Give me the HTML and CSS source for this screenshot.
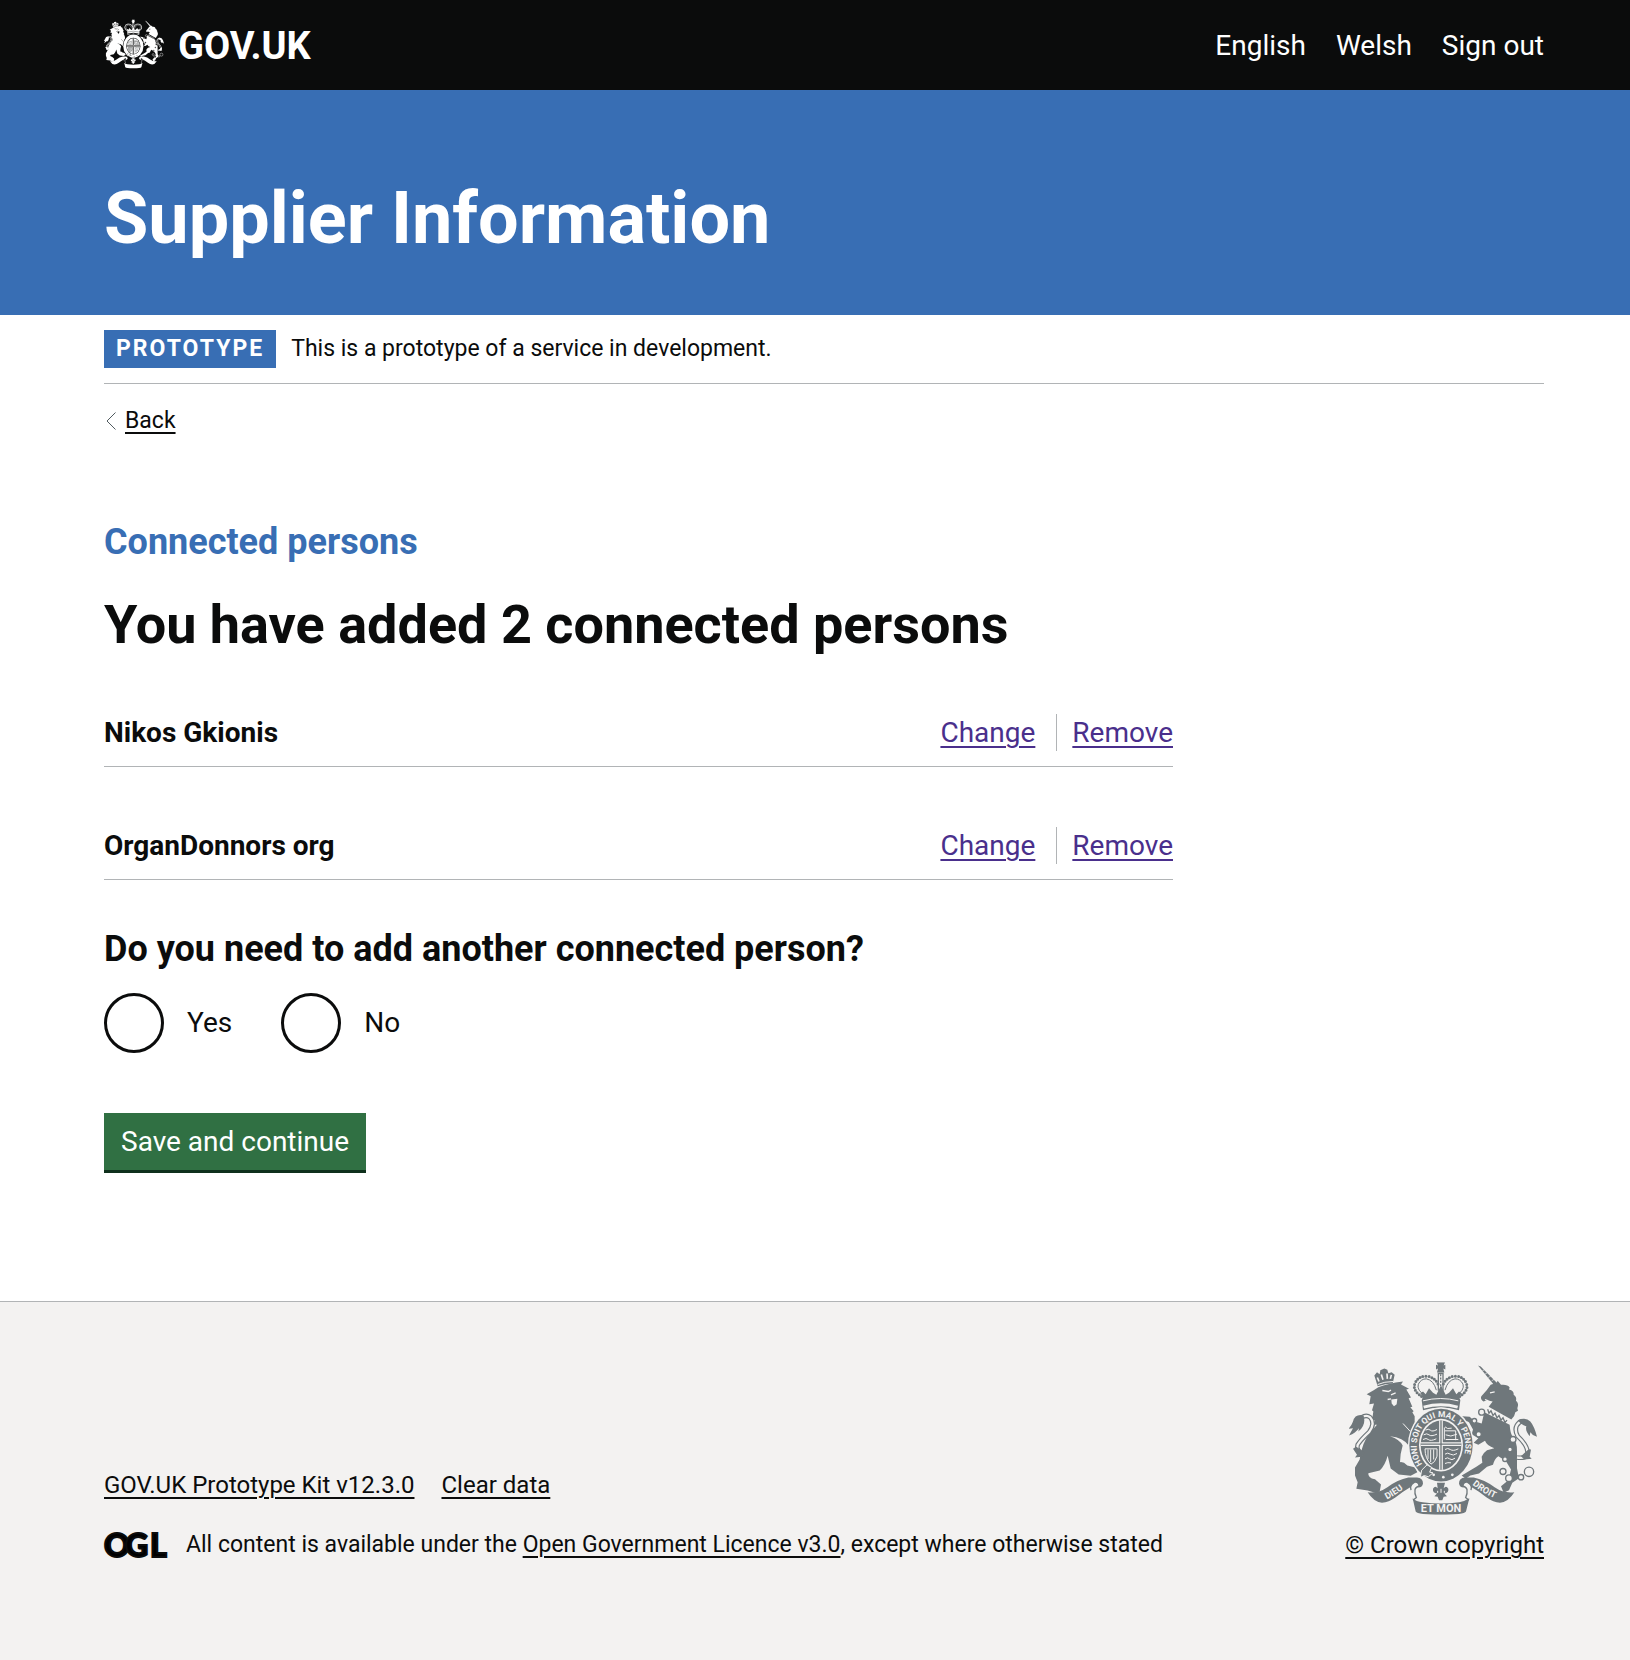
FILE: index.html
```html
<!DOCTYPE html>
<html lang="en">
<head>
  <meta charset="utf-8">
  <meta name="viewport" content="width=device-width, initial-scale=1">
  <title>You have added 2 connected persons - Supplier Information - GOV.UK</title>
  <link rel="stylesheet" href="styles.css">
</head>
<body>

<svg class="sprite" aria-hidden="true">
  <symbol id="arms" viewBox="66 66 564 458">
    <!-- lion: crown, head and body -->
    <path fill="currentColor" d="M152 138l-10-32 8-10 8 6 2-12 12-5 9 4 3 10 10-3 9 8-6 26q-22 0-45 8z"/>
    <path class="cut" d="M151 112l5 12M163 103l5 16M180 100l1 16M193 104l-3 12" stroke-width="5"/>
    <path class="cut" d="M152 133q20-9 46-9" stroke-width="3"/>
    <path fill="currentColor" d="M140 150l14-9q28-11 74-17l-6 9 24 13-8 2 14 24-7 2 11 26-6 1 10 12-4 3 7 12 0 30-8 50-10 8q-16-24-56-28 30 10 38 28-8 26-8 50 10-2 22 10l24 6 6 14-20 11-36-4-24-18-9-38q-8 30-24 44l-34 8q-2 14 20 18l18 16-4 22-16 2-20-6-34-5 4-20-8-20 0-24 14-24q6-50 32-82l20-22-6 0 0-14-9 2 4-28-4-4 6-20-14 2 4-24-12-6z"/>
    <path class="cut" d="M166 151l18 3 8-4M192 164l14-6M182 178l10-2" stroke-width="4"/>
    <path fill="var(--field)" d="M193 178l18-2-2 16-8 6-7-8z"/>
    <path class="cut" d="M228 250l22 24" stroke-width="3"/>
    <!-- lion's tail -->
    <path d="M108 342q-22-10-16-28 10-16 34-38 20-26 4-44-12-10-26 0" fill="none" stroke="currentColor" stroke-width="14"/>
    <path class="cut" d="M108 342q-22-10-16-28 10-16 34-38 20-26 4-44-12-10-26 0" stroke-width="7"/>
    <path fill="currentColor" d="M110 226q-26-6-32 18-4 12-14 22l14-2-12 22q20-8 30-22l-2 10q18-14 18-34z"/>
    <path fill="currentColor" d="M78 326l12 18-6 8 20-2 10-12-26-18z"/>

    <!-- unicorn: horn, head and body -->
    <path fill="currentColor" d="M453 76l8 3 50 50-8 8z"/>
    <path class="cut" d="M466 92l6-3M474 102l8-5M484 112l8-5M494 122l8-5" stroke-width="2"/>
    <path fill="currentColor" d="M512 122l10 12q20-2 26 8l-2 6q16 4 14 16 10 6 7 18 10 8 4 22l2 8-8 4q-2 14-12 22l-68-38 12-16-16-4-12 4q-10-8-6-16l16-18 12-16 18-6z"/>
    <path class="cut" d="M489 158l14-3M474 178l10 4" stroke-width="4"/>
    <path d="M482 207l4 12 6-7 6 14 6-7 6 14 6-7 6 14 6-7 6 14 6-7" fill="none" stroke="currentColor" stroke-width="4"/>
    <path fill="currentColor" d="M472 216l76 38q2 26 8 34 16 20 14 46l0 50 6 30-20 14-10 22-16 8-8-20 22-18 8-32-16-26-22-14q-12 8-16 26l-18 6-24 20-26 6-14 10-12-10 44-26 18-12-2-18q4-12 16-20l22-6q-22-6-28-22l-20 12-14-6 14-14-20-12 4-14-12-22q-10-6-12 2l-18-6 10-14 22 2 16 14 20 6z"/>
    <g fill="var(--field)" stroke="currentColor" stroke-width="4">
      <circle cx="464" cy="216" r="9"/><circle cx="442" cy="242" r="7"/><circle cx="455" cy="282" r="8"/>
      <circle cx="558" cy="298" r="9"/><circle cx="549" cy="328" r="7"/><circle cx="534" cy="357" r="7"/>
      <circle cx="528" cy="394" r="9"/><circle cx="546" cy="414" r="10"/><circle cx="606" cy="395" r="14"/>
      <circle cx="582" cy="411" r="8"/>
    </g>
    <!-- unicorn's tail -->
    <path d="M570 352q30 4 32-14 0-22-30-50-14-26 6-42 12-6 20 4" fill="none" stroke="currentColor" stroke-width="14"/>
    <path class="cut" d="M570 352q30 4 32-14 0-22-30-50-14-26 6-42 12-6 20 4" stroke-width="7"/>
    <path fill="currentColor" d="M572 240q24-10 38 4 12 14 20 46-14-4-20-14l-2 12q-14-16-10-30-12-2-26-18z"/>
    <path fill="currentColor" d="M612 328l-4 22 6 6-22 2-10-10 22-20z"/>

    <!-- royal crown -->
    <path fill="currentColor" d="M329 66h25l-4 10 5-2v14l-6-3 3 12h-22l3-12-6 3V74l6 2z"/>
    <path d="M334 100h14v50h-14z" fill="none" stroke="currentColor" stroke-width="4"/>
    <path d="M341 102v46" stroke="currentColor" stroke-width="4" stroke-dasharray="6 4"/>
    <path d="M292 174q-38-22-28-44 8-22 34-22 26 2 36 26M390 174q38-22 28-44-8-22-34-22-26 2-36 26" fill="none" stroke="currentColor" stroke-width="9" stroke-linecap="round" stroke-dasharray="0 9"/>
    <path d="M296 168q-28-18-22-36 8-16 24-16 22 4 30 34M386 168q28-18 22-36-8-16-24-16-22 4-30 34" fill="none" stroke="currentColor" stroke-width="3"/>
    <path fill="currentColor" d="M284 180l4-10-8-10 8-6 8 8 10-18 12 14 10 6 14-28 14 28 10-6 12-14 10 18 8-8 8 6-8 10 4 10-4 30q-54-16-108 0z"/>
    <path class="cut" d="M288 182q53-14 106 0" stroke-width="3"/>
    <path class="cut" d="M290 201q52-14 102 0" stroke-width="9"/>

    <!-- garter and shield -->
    <ellipse cx="342" cy="315" rx="99" ry="114" fill="var(--field)"/>
    <ellipse cx="342" cy="315" rx="95" ry="109" fill="currentColor"/>
    <ellipse cx="342" cy="315" rx="66" ry="79" fill="var(--field)"/>
    <ellipse cx="342" cy="315" rx="61" ry="74" fill="currentColor"/>
    <path class="cut" d="M342 241v148M281 312h122" stroke-width="11"/>
    <path d="M342 241v148M281 312h122" stroke="currentColor" stroke-width="4"/>
    <g class="cut" stroke-width="3">
      <path d="M296 270q8-6 14 0t20-2M290 284q10-6 16 0t24-2M288 298q10-6 16 0t24-2M354 260q6 8 20 4M354 272h32M356 284q14 8 34-2M356 298h38M352 262v36M386 272v28M354 328q8-6 16 0t24-2M354 342q8-6 16 0t20-2M354 356q8-6 14 0t16-2M354 370q8-4 18-2"/>
      <path d="M294 326h36v22q-6 20-18 24-18-16-18-46zM303 328v28M311 328v38M320 328v30"/>
    </g>
    <circle cx="320" cy="404" r="4" fill="var(--field)"/><circle cx="349" cy="411" r="4" fill="var(--field)"/><circle cx="376" cy="404" r="4" fill="var(--field)"/>
    <path fill="currentColor" stroke="var(--field)" stroke-width="3" d="M284 390l16-16 14 8-6 14 10 2-14 12-12-4-12 6z"/>

    <!-- ribbons -->
    <path d="M252 450q-6-22 16-28 18 2 14 14-16 4-18 12-2 12 4 24l-10 8M432 450q6-22-16-28-18 2-14 14 16 4 18 12 2 12-4 24l10 8" fill="var(--field)" stroke="currentColor" stroke-width="4"/>
    <path fill="currentColor" d="M122 456q32 4 58-14 32-24 64-30l26 0q18 2 18 18-2 12-14 12 2-14-10-14-8 4-12 12-24 14-47 32-20 14-40 16-26-4-43-32z"/>
    <path fill="currentColor" d="M562 456q-32 4-58-14-32-24-64-30l-26 0q-18 2-18 18 2 12 14 12-2-14 10-14 8 4 12 12 24 14 47 32 20 14 40 16 26-4 43-32z"/>
    <path fill="currentColor" d="M257 474q10 10 30 12 54 8 110 0 18-4 30-12l-10 40q-6 10-75 10-70 0-76-10z"/>
    <path fill="currentColor" d="M330 428h24l-4 16q8-10 14 2 2 12-12 14l8 8-10 2-4 10h-10l-4-10-10-2 8-8q-14-2-12-14 6-12 14-2z"/>
    <path class="cut" d="M342 446v12M332 452v6M352 452v6" stroke-width="3"/>
  </symbol>
</svg>

<header class="header">
  <div class="container header__inner">
    <a class="header__logo" href="#">
      <svg class="header__crest" aria-hidden="true"><use href="#arms"/></svg>
      <span>GOV.UK</span>
    </a>
    <nav class="header__nav" aria-label="Menu">
      <a href="#">English</a>
      <a href="#">Welsh</a>
      <a href="#">Sign out</a>
    </nav>
  </div>
</header>

<div class="masthead">
  <div class="container">
    <p class="masthead__title">Supplier Information</p>
  </div>
</div>

<div class="container">
  <div class="phase">
    <strong class="phase__tag">PROTOTYPE</strong>
    <span>This is a prototype of a service in development.</span>
  </div>
  <a class="back" href="#">
    <svg class="back__arrow" viewBox="0 0 10 18" aria-hidden="true"><path d="M9.500 .5L1 9l8.500 8.500" fill="none" stroke="#505a5f"/></svg>
    <span class="link">Back</span>
  </a>

  <main class="main">
    <p class="caption">Connected persons</p>
    <h1 class="heading">You have added 2 connected persons</h1>

    <ul class="people">
      <li class="person">
        <span class="person__name">Nikos Gkionis</span>
        <span class="person__actions">
          <a class="link" href="#">Change</a>
          <a class="link" href="#">Remove</a>
        </span>
      </li>
      <li class="person">
        <span class="person__name">OrganDonnors org</span>
        <span class="person__actions">
          <a class="link" href="#">Change</a>
          <a class="link" href="#">Remove</a>
        </span>
      </li>
    </ul>

    <form action="#">
      <fieldset class="question">
        <legend class="question__title">Do you need to add another connected person?</legend>
        <div class="radios">
          <div class="radio">
            <input type="radio" id="another-yes" name="another" value="yes">
            <label for="another-yes">Yes</label>
          </div>
          <div class="radio">
            <input type="radio" id="another-no" name="another" value="no">
            <label for="another-no">No</label>
          </div>
        </div>
      </fieldset>
      <button class="button" type="submit">Save and continue</button>
    </form>
  </main>
</div>

<footer class="footer">
  <div class="container footer__inner">
    <div class="footer__meta">
      <div class="footer__links">
        <a class="link" href="#">GOV.UK Prototype Kit v12.3.0</a>
        <a class="link" href="#">Clear data</a>
      </div>
      <div class="licence">
        <svg class="licence__logo" viewBox="0 0 62 25" role="img" aria-label="Open Government Licence"><text x="0 21 46" y="24">OGL</text></svg>
        <span>All content is available under the <a class="link" href="#">Open Government Licence v3.0</a>, except where otherwise stated</span>
      </div>
    </div>
    <div class="copyright">
      <svg class="copyright__arms" viewBox="66 66 564 458" aria-hidden="true">
        <use href="#arms" x="66" y="66" width="564" height="458"/>
        <path id="garter" d="M301 388A73 86 0 1 1 383 388" fill="none"/>
        <path id="dieu" d="M180 478Q214 460 250 431" fill="none"/>
        <path id="droit" d="M436 434Q472 462 515 480" fill="none"/>
        <g class="motto">
          <text><textPath href="#garter" startOffset="22">HONI SOIT QUI MAL Y PENSE</textPath></text>
          <text class="motto__ribbon"><textPath href="#dieu">DIEU</textPath></text>
          <text class="motto__ribbon"><textPath href="#droit">DROIT</textPath></text>
          <text class="motto__base" x="342" y="517" text-anchor="middle">ET MON</text>
        </g>
      </svg>
      <a class="link" href="#">© Crown copyright</a>
    </div>
  </div>
</footer>

</body>
</html>
```
FILE: styles.css
```css
:root {
  --black: #0b0c0c;
  --blue: #386eb4;
  --line: #b1b4b6;
  --grey: #f3f2f1;
}

* { box-sizing: border-box; }

body {
  margin: 0;
  min-height: 100vh;
  display: flex;
  flex-direction: column;
  background: #fff;
  color: var(--black);
  font-family: Roboto, "Liberation Sans", Arial, sans-serif;
  font-size: 23px;
  line-height: 28px;
}

p, h1, ul { margin: 0; padding: 0; }

a { color: inherit; text-decoration: none; }

.link {
  text-decoration: underline;
  text-decoration-thickness: 2px;
  text-underline-offset: 4px;
}

.sprite { position: absolute; width: 0; height: 0; }
.cut { fill: none; stroke: var(--field); }

.container { padding: 0 86px 0 104px; }

/* Header */
.header { background: var(--black); color: #fff; }

.header__inner {
  display: flex;
  align-items: center;
  justify-content: space-between;
  padding-top: 18px;
  padding-bottom: 16px;
}

.header__logo {
  display: flex;
  align-items: center;
  gap: 14px;
  font-size: 38px;
  font-weight: 700;
  line-height: 56px;
}

.header__crest { --field: #0b0c0c; width: 60px; height: 52px; margin-bottom: 4px; }

.header__nav { display: flex; gap: 30px; font-size: 28px; }

.masthead { background: var(--blue); color: #fff; padding: 89px 0 56px; }
.masthead__title { font-size: 72px; font-weight: 700; line-height: 80px; }

/* Phase banner and back link */
.phase {
  display: flex;
  align-items: center;
  gap: 15px;
  padding: 15px 0;
  border-bottom: 1px solid var(--line);
}

.phase__tag {
  padding: 0 12px;
  background: var(--blue);
  color: #fff;
  line-height: 38px;
  letter-spacing: 2px;
}

.back { display: inline-flex; align-items: center; gap: 9px; margin-top: 23px; padding-left: 2px; }
.back__arrow { width: 10px; height: 18px; }

/* Main content */
.main { max-width: 1069px; padding: 85px 0 131px; }
.caption { margin-bottom: 33px; color: var(--blue); font-size: 36px; font-weight: 700; line-height: 40px; }
.heading { margin-bottom: 59px; font-size: 54px; line-height: 60px; }

.people { list-style: none; display: grid; gap: 60px; margin-bottom: 49px; }

.person {
  display: flex;
  justify-content: space-between;
  padding-bottom: 15px;
  border-bottom: 1px solid var(--line);
  font-size: 28px;
  line-height: 37px;
}

.person__name { font-weight: 700; }
.person__actions { display: flex; color: #4a2f8c; }
.person__actions .link + .link { margin-left: 21px; padding-left: 15px; border-left: 1px solid var(--line); }

.question { margin: 0 0 60px; padding: 0; border: 0; min-width: 0; }
.question__title { margin-bottom: 24px; padding: 0; font-size: 36px; font-weight: 700; line-height: 40px; }

.radios { display: flex; gap: 26px; }
.radio { display: flex; align-items: center; font-size: 28px; }

.radio input {
  appearance: none;
  width: 60px;
  height: 60px;
  margin: 0;
  border: 3px solid var(--black);
  border-radius: 50%;
}
.radio input:checked { box-shadow: inset 0 0 0 12px #fff; background: var(--black); }
.radio label { padding: 0 23px; }

.button {
  display: block;
  padding: 10px 17px;
  border: 0;
  box-shadow: 0 3px 0 #0f301c;
  background: #307043;
  color: #fff;
  font: inherit;
  font-size: 28px;
  line-height: 37px;
}

/* Footer */
.footer { flex: 1; padding: 60px 0; border-top: 1px solid var(--line); background: var(--grey); }
.footer__inner { display: flex; align-items: flex-end; justify-content: space-between; }
.footer__meta { display: grid; gap: 32px; }
.footer__links { display: flex; gap: 27px; font-size: 24px; }

.licence { display: flex; align-items: center; gap: 20px; }
.licence__logo { width: 62px; height: 25px; overflow: visible; }
.licence__logo text { font-family: Lato, sans-serif; font-size: 32px; font-weight: 900; stroke: var(--black); stroke-width: 2px; }

.copyright { display: flex; flex-direction: column; align-items: center; gap: 16px; font-size: 24px; }
.copyright__arms { --field: #f3f2f1; width: 188px; height: 153px; margin-right: 4px; color: #6f777b; }

.motto { fill: var(--grey); font-size: 25px; font-weight: 700; }
.motto__ribbon { font-size: 27px; }
.motto__base { font-size: 33px; }
```
